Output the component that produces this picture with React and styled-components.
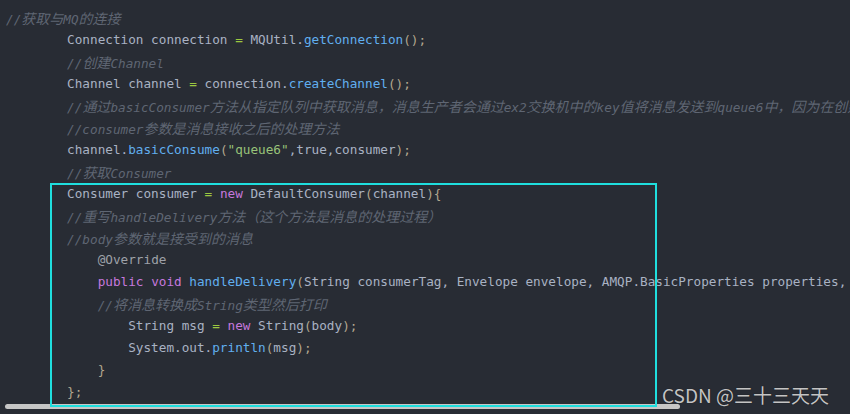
import React from 'react';
import styled, { createGlobalStyle } from 'styled-components';

const GlobalStyle = createGlobalStyle`
  html, body {
    margin: 0;
    padding: 0;
    background: #282c34;
  }
`;

const COLORS = {
  text: '#a9b2c3',
  comment: '#5f6673',
  kw: '#c678dd',
  fn: '#61afef',
  op: '#9cc840',
  str: '#98c379',
  lit: '#a9b2c3',
  punct: '#b3a78f',
  anno: '#9ea1a8',
};

const Editor = styled.div`
  position: relative;
  width: 850px;
  height: 414px;
  overflow: hidden;
  background: #282c34;
`;

const Code = styled.div`
  padding: 7px 0 0 6px;
  font-family: "DejaVu Sans Mono", monospace;
  font-size: 12.7px;
`;

const Line = styled.div`
  height: 22px;
  line-height: 22px;
  white-space: pre;
  overflow: hidden;
  padding-left: ${(p) => p.$indent}ch;
  color: ${COLORS.text};
`;

const Tok = styled.span`
  color: ${(p) => COLORS[p.$kind] || COLORS.text};
  font-style: ${(p) => (p.$kind === 'comment' ? 'italic' : 'normal')};
`;

const Cjk = styled.span`
  font-family: "Noto Sans CJK SC", sans-serif;
  font-size: 14px;
`;

const ScrollThumb = styled.div`
  margin: 1px 0 0 5px;
  width: 675px;
  height: 5px;
  border-radius: 3px;
  background: #c6c6c6;
`;

const Highlight = styled.div`
  position: absolute;
  left: 50px;
  top: 183px;
  width: 607px;
  height: 224px;
  box-sizing: border-box;
  border: 2px solid #1fdede;
  pointer-events: none;
`;

const Watermark = styled.div`
  position: absolute;
  left: 662px;
  top: 384px;
  font-family: "Noto Sans CJK SC", sans-serif;
  font-size: 19px;
  line-height: 22px;
  color: #c4c4c4;
  text-shadow: 0 0 1px rgba(0, 0, 0, 0.6);
  white-space: nowrap;
`;

const CJK_RE = /([\u3000-\u303f\u4e00-\u9fff\uff00-\uffef]+)/;

function renderText(text) {
  return text.split(CJK_RE).map((part, i) =>
    CJK_RE.test(part) && i % 2 === 1 ? <Cjk key={i}>{part}</Cjk> : part
  );
}

const c = (t) => [['comment', t]];

const LINES = [
  { indent: 0, toks: c('//获取与MQ的连接') },
  {
    indent: 8,
    toks: [
      ['text', 'Connection connection '],
      ['op', '='],
      ['text', ' MQUtil.'],
      ['fn', 'getConnection'],
      ['punct', '();'],
    ],
  },
  { indent: 8, toks: c('//创建Channel') },
  {
    indent: 8,
    toks: [
      ['text', 'Channel channel '],
      ['op', '='],
      ['text', ' connection.'],
      ['fn', 'createChannel'],
      ['punct', '();'],
    ],
  },
  {
    indent: 8,
    toks: c(
      '//通过basicConsumer方法从指定队列中获取消息，消息生产者会通过ex2交换机中的key值将消息发送到queue6中，因为在创建队列的时候已经绑定'
    ),
  },
  { indent: 8, toks: c('//consumer参数是消息接收之后的处理方法') },
  {
    indent: 8,
    toks: [
      ['text', 'channel.'],
      ['fn', 'basicConsume'],
      ['punct', '('],
      ['str', '"queue6"'],
      ['text', ','],
      ['lit', 'true'],
      ['text', ',consumer'],
      ['punct', ');'],
    ],
  },
  { indent: 8, toks: c('//获取Consumer') },
  {
    indent: 8,
    toks: [
      ['text', 'Consumer consumer '],
      ['op', '='],
      ['text', ' '],
      ['kw', 'new'],
      ['text', ' DefaultConsumer'],
      ['punct', '('],
      ['text', 'channel'],
      ['punct', '){'],
    ],
  },
  { indent: 8, toks: c('//重写handleDelivery方法（这个方法是消息的处理过程）') },
  { indent: 8, toks: c('//body参数就是接受到的消息') },
  { indent: 12, toks: [['anno', '@Override']] },
  {
    indent: 12,
    toks: [
      ['kw', 'public'],
      ['text', ' '],
      ['kw', 'void'],
      ['text', ' '],
      ['fn', 'handleDelivery'],
      ['punct', '('],
      ['text', 'String consumerTag, Envelope envelope, AMQP.BasicProperties properties, byte[] body'],
      ['punct', ')'],
    ],
  },
  { indent: 12, toks: c('//将消息转换成String类型然后打印') },
  {
    indent: 16,
    toks: [
      ['text', 'String msg '],
      ['op', '='],
      ['text', ' '],
      ['kw', 'new'],
      ['text', ' String'],
      ['punct', '('],
      ['text', 'body'],
      ['punct', ');'],
    ],
  },
  {
    indent: 16,
    toks: [
      ['text', 'System.out.'],
      ['fn', 'println'],
      ['punct', '('],
      ['text', 'msg'],
      ['punct', ');'],
    ],
  },
  { indent: 12, toks: [['punct', '}']] },
  { indent: 8, toks: [['punct', '};']] },
];

export default function App() {
  return (
    <>
      <GlobalStyle />
      <Editor>
        <Code>
          {LINES.map((line, i) => (
            <Line key={i} $indent={line.indent}>
              {line.toks.map(([kind, text], j) => (
                <Tok key={j} $kind={kind}>
                  {kind === 'comment' ? renderText(text) : text}
                </Tok>
              ))}
            </Line>
          ))}
        </Code>
        <ScrollThumb />
        <Highlight />
        <Watermark>CSDN @三十三天天</Watermark>
      </Editor>
    </>
  );
}
